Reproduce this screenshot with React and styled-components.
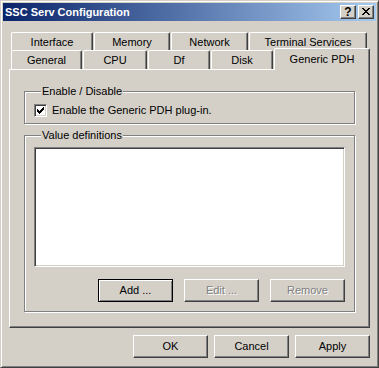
import React from "react";
import styled, { createGlobalStyle, css } from "styled-components";

const Global = createGlobalStyle`
  html, body { margin: 0; padding: 0; background: #d4d0c8; }
  * { box-sizing: border-box; }
`;

const FACE = "#d4d0c8";
const SHADOW = "#808080";
const DARK = "#404040";

const Window = styled.div`
  width: 379px;
  height: 368px;
  background: ${FACE};
  border: 1px solid;
  border-color: ${FACE} ${DARK} ${DARK} ${FACE};
  box-shadow: inset 1px 1px #fff, inset -1px -1px ${SHADOW};
  padding: 2px;
  display: flex;
  flex-direction: column;
  font-family: "Liberation Sans", Arial, sans-serif;
  font-size: 11px;
  color: #000;
  overflow: hidden;
`;

const TitleBar = styled.div`
  height: 18px;
  flex: none;
  display: flex;
  align-items: center;
  padding: 0 2px;
  background: linear-gradient(to right, #0a246a, #a6caf0);
`;

const TitleText = styled.div`
  flex: 1;
  color: #fff;
  font-weight: bold;
  font-size: 11px;
  line-height: 13px;
`;

const CaptionButton = styled.div`
  width: 16px;
  height: 14px;
  margin-left: 2px;
  background: ${FACE};
  border: 1px solid;
  border-color: #fff ${DARK} ${DARK} #fff;
  box-shadow: inset -1px -1px ${SHADOW};
  display: flex;
  align-items: center;
  justify-content: center;
  font-weight: bold;
  font-size: 12px;
  line-height: 12px;
  padding-bottom: 1px;
  color: #000;
`;

const Body = styled.div`
  flex: 1;
  display: flex;
  flex-direction: column;
  padding: 11px 6px 0 6px;
`;

const TabStrip = styled.div`
  display: flex;
  flex-direction: column;
  padding-left: 2px;
`;

const TabRow = styled.div`
  display: flex;
  align-items: flex-end;
  gap: 1px;
  height: ${(p) => p.$h}px;
`;

const Tab = styled.div`
  position: relative;
  width: ${(p) => p.$w}px;
  height: ${(p) => p.$h}px;
  background: ${FACE};
  border-top: 1px solid #fff;
  border-left: 1px solid #fff;
  border-right: 1px solid ${DARK};
  border-radius: 2px 2px 0 0;
  box-shadow: inset -1px 0 ${SHADOW};
  display: flex;
  justify-content: center;
  align-items: flex-start;
  padding-top: 3px;
  line-height: 13px;
  white-space: nowrap;
  ${(p) =>
    p.$selected &&
    css`
      z-index: 2;
      margin-bottom: -1px;
      padding-top: 4px;
    `}
`;

const Panel = styled.div`
  height: 259px;
  background: ${FACE};
  border: 1px solid;
  border-color: #fff ${DARK} ${DARK} #fff;
  box-shadow: inset -1px -1px ${SHADOW};
  padding: 15px 14px 0 14px;
  display: flex;
  flex-direction: column;
  gap: 5px;
`;

const Group = styled.fieldset`
  margin: 0;
  min-inline-size: 0;
  border: 1px solid ${SHADOW};
  box-shadow: inset 1px 1px #fff, 1px 1px #fff;
  padding: ${(p) => p.$pad};
  display: flex;
  flex-direction: column;
`;

const Legend = styled.legend`
  margin-left: 7px;
  padding: 0 1px;
  line-height: 13px;
  background: ${FACE};
`;

const CheckRow = styled.label`
  display: flex;
  align-items: center;
  gap: 5px;
  height: 13px;
  line-height: 13px;
`;

const CheckBox = styled.span`
  width: 13px;
  height: 13px;
  flex: none;
  background: #fff;
  border: 1px solid;
  border-color: ${SHADOW} #fff #fff ${SHADOW};
  box-shadow: inset 1px 1px ${DARK}, inset -1px -1px ${FACE};
  display: flex;
  padding: 2px;
`;

const ListBox = styled.div`
  height: 120px;
  background: #fff;
  border: 1px solid;
  border-color: ${SHADOW} #fff #fff ${SHADOW};
  box-shadow: inset 1px 1px ${DARK}, inset -1px -1px ${FACE};
`;

const ButtonRow = styled.div`
  display: flex;
  justify-content: flex-end;
  gap: ${(p) => p.$gap}px;
  margin-top: ${(p) => p.$mt}px;
`;

const Button = styled.button`
  width: 75px;
  height: 23px;
  padding: 0;
  margin: 0;
  font-family: "Liberation Sans", Arial, sans-serif;
  font-size: 11px;
  line-height: 13px;
  background: ${FACE};
  color: #000;
  border: 1px solid;
  border-color: #fff ${DARK} ${DARK} #fff;
  box-shadow: inset -1px -1px ${SHADOW};
  border-radius: 0;
  ${(p) =>
    p.$default &&
    css`
      border-color: #000;
      box-shadow: inset 1px 1px #fff, inset -1px -1px ${SHADOW};
    `}
  &:disabled {
    color: ${SHADOW};
    text-shadow: 1px 1px #fff;
  }
`;

const checkCols = [
  [0, 2], [1, 3], [2, 4], [3, 3], [4, 2], [5, 1], [6, 0],
];

const CheckMark = () => (
  <svg width="7" height="7" viewBox="0 0 7 7" shapeRendering="crispEdges">
    {checkCols.map(([x, y]) => (
      <rect key={x} x={x} y={y} width="1" height="3" fill="#000" />
    ))}
  </svg>
);

const xPixels = [
  [0, 0, 2], [6, 0, 2],
  [1, 1, 2], [5, 1, 2],
  [2, 2, 4],
  [3, 3, 2],
  [2, 4, 4],
  [1, 5, 2], [5, 5, 2],
  [0, 6, 2], [6, 6, 2],
];

const CloseGlyph = () => (
  <svg width="8" height="7" viewBox="0 0 8 7" shapeRendering="crispEdges">
    {xPixels.map(([x, y, w], i) => (
      <rect key={i} x={x} y={y} width={w} height="1" fill="#000" />
    ))}
  </svg>
);

const backTabs = [
  ["Interface", 82],
  ["Memory", 76],
  ["Network", 77],
  ["Terminal Services", 118],
];

const frontTabs = [
  ["General", 71],
  ["CPU", 64],
  ["Df", 62],
  ["Disk", 62],
  ["Generic PDH", 96, true],
];

export default function App() {
  return (
    <>
      <Global />
      <Window>
        <TitleBar>
          <TitleText>SSC Serv Configuration</TitleText>
          <CaptionButton>?</CaptionButton>
          <CaptionButton>
            <CloseGlyph />
          </CaptionButton>
        </TitleBar>
        <Body>
          <TabStrip>
            <TabRow $h={18}>
              {backTabs.map(([label, w]) => (
                <Tab key={label} $w={w} $h={18}>
                  {label}
                </Tab>
              ))}
            </TabRow>
            <TabRow $h={19}>
              {frontTabs.map(([label, w, sel]) => (
                <Tab key={label} $w={w} $h={sel ? 22 : 19} $selected={sel}>
                  {label}
                </Tab>
              ))}
            </TabRow>
          </TabStrip>
          <Panel>
            <Group $pad="6px 9px 6px 9px">
              <Legend>Enable / Disable</Legend>
              <CheckRow>
                <CheckBox>
                  <CheckMark />
                </CheckBox>
                Enable the Generic PDH plug-in.
              </CheckRow>
            </Group>
            <Group $pad="5px 9px 9px 9px">
              <Legend>Value definitions</Legend>
              <ListBox />
              <ButtonRow $gap={11} $mt={12}>
                <Button $default>Add ...</Button>
                <Button disabled>Edit ...</Button>
                <Button disabled>Remove</Button>
              </ButtonRow>
            </Group>
          </Panel>
          <ButtonRow $gap={6} $mt={7}>
            <Button>OK</Button>
            <Button>Cancel</Button>
            <Button>Apply</Button>
          </ButtonRow>
        </Body>
      </Window>
    </>
  );
}
